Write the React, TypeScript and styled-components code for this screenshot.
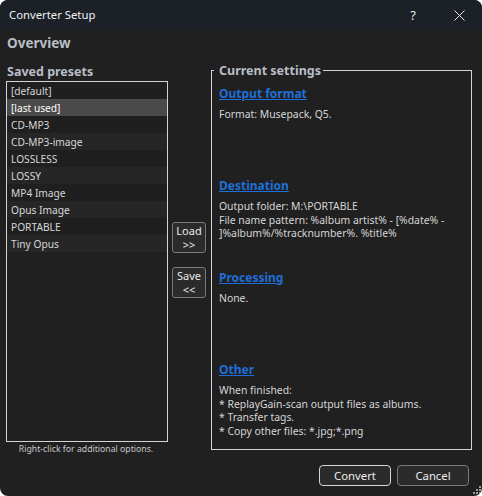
import * as React from 'react';
import styled, { createGlobalStyle } from 'styled-components';

const GlobalStyle = createGlobalStyle`
    html, body {
        margin: 0;
        padding: 0;
        background: #ffffff;
    }
    body {
        font-family: "Noto Sans", "DejaVu Sans", sans-serif;
    }
`;

var presets: string[];
presets = [
    "[default]",
    "[last used]",
    "CD-MP3",
    "CD-MP3-image",
    "LOSSLESS",
    "LOSSY",
    "MP4 Image",
    "Opus Image",
    "PORTABLE",
    "Tiny Opus"
];

type Section = { title: string; lines: string[] };

const sections: Section[] = [
    { title: "Output format", lines: ["Format: Musepack, Q5."] },
    {
        title: "Destination",
        lines: [
            "Output folder: M:\\PORTABLE",
            "File name pattern: %album artist% - [%date% -",
            "]%album%/%tracknumber%. %title%"
        ]
    },
    { title: "Processing", lines: ["None."] },
    {
        title: "Other",
        lines: [
            "When finished:",
            "* ReplayGain-scan output files as albums.",
            "* Transfer tags.",
            "* Copy other files: *.jpg;*.png"
        ]
    }
];

export default function App() {
    return (
        <>
        <GlobalStyle />
        <Window>
            <TitleBar>
                <WindowTitle>Converter Setup</WindowTitle>
                <TitleButtons>
                    <TitleButton>?</TitleButton>
                    <TitleButton>
                        <svg width="11" height="11" viewBox="0 0 11 11">
                            <path d="M0.5 0.5 L10.5 10.5 M10.5 0.5 L0.5 10.5" stroke="#e6e6e6" strokeWidth="1" />
                        </svg>
                    </TitleButton>
                </TitleButtons>
            </TitleBar>
            <Body>
                <Heading>Overview</Heading>
                <Main>
                    <PresetColumn>
                        <Label>Saved presets</Label>
                        <List>
                            {presets.map((name, i) => (
                                <Row key={name} $odd={i % 2 === 1} $selected={i === 1}>{name}</Row>
                            ))}
                        </List>
                        <Hint>Right-click for additional options.</Hint>
                    </PresetColumn>
                    <ActionColumn>
                        <SideButton>
                            <ButtonLine>Load</ButtonLine>
                            <ButtonLine>&gt;&gt;</ButtonLine>
                        </SideButton>
                        <SideButton>
                            <ButtonLine>Save</ButtonLine>
                            <ButtonLine>&lt;&lt;</ButtonLine>
                        </SideButton>
                    </ActionColumn>
                    <Group>
                        <Legend>Current settings</Legend>
                        {sections.map((s) => (
                            <SectionBlock key={s.title}>
                                <SectionLink>{s.title}</SectionLink>
                                {s.lines.map((line) => (
                                    <Line key={line}>{line}</Line>
                                ))}
                            </SectionBlock>
                        ))}
                    </Group>
                </Main>
                <Footer>
                    <DialogButton $default>Convert</DialogButton>
                    <DialogButton>Cancel</DialogButton>
                </Footer>
            </Body>
            <Grip>
                <svg width="8" height="8" viewBox="0 0 8 8">
                    <rect x="6" y="0" width="2" height="2" fill="#9a9a9a" />
                    <rect x="3" y="3" width="2" height="2" fill="#9a9a9a" />
                    <rect x="6" y="3" width="2" height="2" fill="#9a9a9a" />
                    <rect x="0" y="6" width="2" height="2" fill="#9a9a9a" />
                    <rect x="3" y="6" width="2" height="2" fill="#9a9a9a" />
                    <rect x="6" y="6" width="2" height="2" fill="#9a9a9a" />
                </svg>
            </Grip>
        </Window>
        </>
    )
}

const Window = styled.div`
    position: relative;
    width: 482px;
    height: 496px;
    background: #202020;
    border-radius: 8px;
    overflow: hidden;
    display: flex;
    flex-direction: column;
    color: #d6d6d6;
    font-size: 10.4px;
`;

const TitleBar = styled.div`
    height: 30px;
    background: #1c2027;
    display: flex;
    align-items: center;
    justify-content: space-between;
    padding-left: 9px;
    box-sizing: border-box;
`;

const WindowTitle = styled.div`
    font-size: 11.3px;
    color: #f0f0f0;
    margin-top: -1px;
`;

const TitleButtons = styled.div`
    display: flex;
    height: 100%;
`;

const TitleButton = styled.div`
    width: 46px;
    display: flex;
    align-items: center;
    justify-content: center;
    color: #e6e6e6;
    font-size: 13px;
    &:first-child {
        padding-left: 2px;
    }
`;

const Body = styled.div`
    flex: 1;
    display: flex;
    flex-direction: column;
    padding: 0 10px 0 6px;
`;

const Heading = styled.div`
    font-size: 13.5px;
    font-weight: bold;
    color: #b9bec6;
    margin: 3px 0 0 1px;
    height: 21px;
    line-height: 21px;
`;

const Main = styled.div`
    display: flex;
    align-items: flex-start;
    margin-top: 9px;
`;

const PresetColumn = styled.div`
    width: 162px;
    display: flex;
    flex-direction: column;
`;

const Label = styled.div`
    font-size: 12.5px;
    font-weight: bold;
    color: #b9bec6;
    height: 17px;
    line-height: 17px;
    margin-left: 1px;
`;

const List = styled.div`
    height: 359px;
    margin-top: 1px;
    border: 1px solid #d4d4d4;
    display: flex;
    flex-direction: column;
`;

const Row = styled.div<{ $odd: boolean; $selected: boolean }>`
    height: 17px;
    line-height: 18px;
    padding-left: 4px;
    font-size: 10.2px;
    color: ${p => p.$selected ? '#ffffff' : '#d6d6d6'};
    background: ${p => p.$selected ? '#4a4a4a' : p.$odd ? '#262626' : '#1f1f1f'};
`;

const Hint = styled.div`
    font-size: 8.7px;
    color: #c4c8cc;
    text-align: center;
    margin-top: 1px;
    margin-right: 2px;
`;

const ActionColumn = styled.div`
    width: 34px;
    margin-left: 4px;
    padding-top: 159px;
    display: flex;
    flex-direction: column;
    gap: 14px;
`;

const SideButton = styled.div`
    height: 31px;
    box-sizing: border-box;
    border: 1px solid #7a7a7a;
    border-radius: 3px;
    background: #2b2b2b;
    color: #e8e8e8;
    display: flex;
    flex-direction: column;
    align-items: center;
    justify-content: center;
`;

const ButtonLine = styled.span`
    font-size: 11px;
    line-height: 14px;
    height: 14px;
`;

const Group = styled.fieldset`
    width: 261px;
    height: 386px;
    box-sizing: border-box;
    margin: 1px 0 0 5px;
    padding: 9px 7px 0 7px;
    border: 1px solid #d4d4d4;
    min-width: 0;
`;

const Legend = styled.legend`
    font-size: 12.5px;
    font-weight: bold;
    color: #b9bec6;
    margin-left: -5px;
    padding: 0 2px 0 5px;
    line-height: 13px;
`;

const SectionBlock = styled.div`
    height: 92px;
`;

const SectionLink = styled.div`
    font-size: 12px;
    font-weight: bold;
    color: #1f6fd8;
    text-decoration: underline;
    height: 16px;
    line-height: 16px;
    margin-bottom: 6px;
`;

const Line = styled.div`
    line-height: 13.5px;
    white-space: nowrap;
`;

const Footer = styled.div`
    display: flex;
    justify-content: flex-end;
    gap: 6px;
    margin-top: 10px;
    padding-right: 3px;
`;

const DialogButton = styled.div<{ $default?: boolean }>`
    width: 72px;
    height: 21px;
    box-sizing: border-box;
    border: 1px solid ${p => p.$default ? '#d6d6d6' : '#7a7a7a'};
    border-radius: 4px;
    background: #2b2b2b;
    color: #ececec;
    font-size: 11.3px;
    display: flex;
    align-items: center;
    justify-content: center;
`;

const Grip = styled.div`
    position: absolute;
    right: 1px;
    bottom: 2px;
    line-height: 0;
`;
